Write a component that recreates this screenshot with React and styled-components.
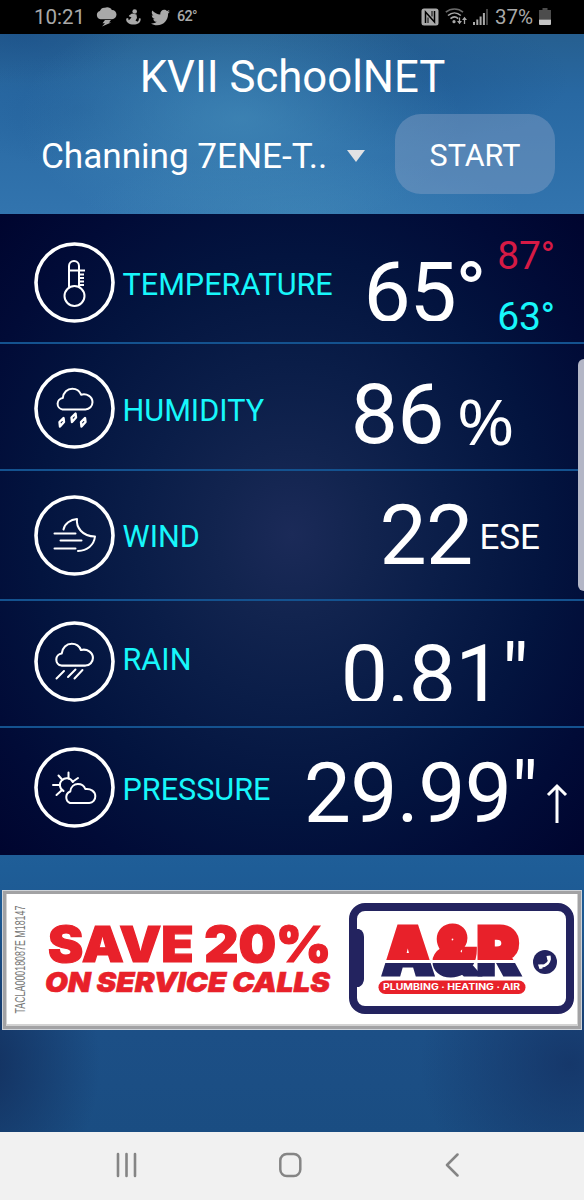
import React from "react";
import styled, { createGlobalStyle } from "styled-components";
import { FaTwitter } from "react-icons/fa";

const GlobalStyle = createGlobalStyle`
  * { box-sizing: border-box; }
  body { margin: 0; background: #000; }
`;

const Screen = styled.div`
  position: relative;
  display: flex;
  flex-direction: column;
  width: 584px;
  height: 1200px;
  overflow: hidden;
  font-family: Roboto, "Liberation Sans", sans-serif;
  color: #fff;
`;

const StatusBar = styled.div`
  display: flex;
  align-items: center;
  justify-content: space-between;
  height: 34px;
  padding: 0 33px 0 34px;
  background: #000;
  color: #a9a9a9;
  font-size: 20.5px;
  line-height: 36px;
  svg { display: block; flex: none; }
`;

const StatusGroup = styled.div`
  display: flex;
  align-items: center;
  gap: ${(p) => p.$gap}px;
`;

const Clock = styled.span`
  width: 52px;
`;

const SmallTemp = styled.span`
  margin-left: -2px;
  font-size: 14.5px;
  font-weight: 500;
  letter-spacing: -0.8px;
`;

const Sky = styled.main`
  display: flex;
  flex-direction: column;
  height: 1098px;
  background:
    radial-gradient(ellipse 220px 120px at 240px 85px, rgba(74, 147, 189, 0.55), transparent),
    radial-gradient(ellipse 120px 60px at 80px 75px, rgba(30, 88, 146, 0.35), transparent),
    radial-gradient(ellipse 170px 70px at 400px 45px, rgba(28, 84, 140, 0.5), transparent),
    radial-gradient(ellipse 220px 60px at 300px 180px, rgba(66, 138, 184, 0.5), transparent),
    radial-gradient(ellipse 120px 50px at 20px 0, rgba(24, 76, 136, 0.5), transparent),
    radial-gradient(ellipse 120px 150px at -20px 1030px, rgba(18, 46, 92, 0.95), transparent),
    radial-gradient(ellipse 150px 140px at 570px 1030px, rgba(20, 50, 100, 0.8), transparent),
    linear-gradient(180deg, #265f90 0, #2868a2 60px, #3274ae 180px, #2868a2 700px, #1e5d97 835px, #1c4f86 1000px, #1a4d82 1098px);
`;

const Header = styled.header`
  display: flex;
  flex-direction: column;
  height: 180px;
`;

const Title = styled.h1`
  margin: 16.5px 0 0 1px;
  font-size: 43.7px;
  font-weight: 400;
  line-height: 52px;
  text-align: center;
`;

const Controls = styled.div`
  display: flex;
  align-items: center;
  height: 80px;
  margin-top: 11.5px;
  padding: 0 29px 0 41px;
`;

const StationSelect = styled.div`
  display: flex;
  align-items: center;
  flex: 1;
  gap: 20px;
  padding-top: 4px;
  font-size: 35.2px;
  letter-spacing: -0.05px;
  line-height: 76px;
  white-space: nowrap;
`;

const Caret = styled.span`
  border: 9px solid transparent;
  border-top: 12px solid #e2e2e4;
  border-bottom: 0;
`;

const StartButton = styled.button`
  width: 160px;
  height: 80px;
  padding: 0;
  border: 0;
  border-radius: 26px;
  background: rgba(140, 165, 200, 0.42);
  color: #fff;
  font: 400 30.5px/84px Roboto, sans-serif;
`;

const Panel = styled.section`
  display: flex;
  flex-direction: column;
  height: 641px;
  background: radial-gradient(ellipse 410px 450px at 50% 50%, #1b2a58 0, #12244f 18%, #0a1d48 38%, #03143f 62%, #010b37 82%, #00052f 100%);
`;

const Row = styled.div`
  display: flex;
  align-items: flex-start;
  height: ${(p) => p.$height}px;
  padding-left: 34px;
  border-bottom: ${(p) => (p.$last ? 0 : "2px solid #14528f")};
`;

const IconSlot = styled.div`
  width: 81px;
  height: 81px;
  margin-top: ${(p) => p.$top}px;
  svg { display: block; }
`;

const Label = styled.div`
  flex: 1;
  margin: ${(p) => p.$top}px 0 0 7.5px;
  color: #17f7fb;
  font-size: 30.6px;
  line-height: 36px;
`;

const Reading = styled.div`
  display: flex;
  align-items: flex-start;
  margin-right: ${(p) => p.$right}px;
`;

const Value = styled.div`
  height: ${(p) => p.$clip || 100}px;
  margin-top: ${(p) => p.$top}px;
  overflow: ${(p) => (p.$clip ? "hidden" : "visible")};
  font-size: 84px;
  letter-spacing: ${(p) => p.$track ?? -0.7}px;
  line-height: 100px;
  white-space: nowrap;
`;

const Unit = styled.div`
  margin: ${(p) => p.$top}px 0 0 ${(p) => p.$left}px;
  font-size: ${(p) => p.$size}px;
  line-height: 1.2;
`;

const Percent = styled(Unit)`
  font-family: "Open Sans", "Noto Sans", sans-serif;
  transform: scaleX(1.13);
`;

const Extremes = styled.div`
  display: flex;
  flex-direction: column;
  gap: 13px;
  margin: 17.5px 0 0 12px;
  font-size: 39px;
  line-height: 48px;
  letter-spacing: -0.2px;
`;

const High = styled.span` color: #d61a45; `;
const Low = styled.span` color: #17f7fb; `;

const Ad = styled.a`
  display: flex;
  height: 140px;
  margin: 35px 2px 0;
  border: 1px solid #cfd3d8;
  box-shadow: inset 0 0 0 3px #a2a2a4, inset 0 -1px 0 4px #d2d2d2;
  background: #fff;
  color: #e8212a;
`;

const License = styled.div`
  width: 14px;
  height: 110px;
  margin: 14px 0 0 10px;
  writing-mode: vertical-rl;
  transform: rotate(180deg);
  color: #777;
  font: 400 14.5px/14px "Liberation Sans", sans-serif;
  white-space: nowrap;
  span {
    display: block;
    height: 184px;
    transform: translateY(1.5px) scaleY(0.612);
    transform-origin: top;
  }
`;

const Offer = styled.div`
  width: 300px;
  margin: 30px 0 0 21px;
  font-family: Inter, sans-serif;
  font-weight: 900;
  white-space: nowrap;
`;

const OfferMain = styled.div`
  width: max-content;
  margin-left: 0;
  font-size: 49px;
  line-height: 47px;
  -webkit-text-stroke: 1.2px #e8212a;
  transform: scaleX(1.08);
  transform-origin: left;
`;

const OfferSub = styled.div`
  width: max-content;
  margin-left: -3.5px;
  font-size: 27.5px;
  font-style: italic;
  line-height: 28px;
  -webkit-text-stroke: 0.6px #e8212a;
  transform: scaleX(1.075);
  transform-origin: left;
`;

const BrandSlot = styled.div`
  margin-top: 11px;
  svg { display: block; }
`;

const NavBar = styled.nav`
  display: flex;
  align-items: flex-start;
  height: 68px;
  padding: 20px 0 0 115px;
  gap: 142px;
  background: #f1f1f1;
  svg { display: block; }
`;

const EdgeHandle = styled.div`
  position: absolute;
  top: 359px;
  right: 0;
  width: 6px;
  height: 232px;
  border-radius: 6px 0 0 6px;
  background: #b3b6c6;
`;

const TrendArrow = styled.svg`
  display: block;
  width: 22px;
  height: 42px;
  margin: 54px 0 0 ${(p) => p.$left}px;
`;

const RoundIcon = ({ children }) => (
  <svg width="81" height="81" viewBox="0 0 81 81" fill="none" stroke="#fff" strokeWidth="2" strokeLinecap="round" strokeLinejoin="round">
    <circle cx="40.5" cy="40.5" r="38.5" strokeWidth="3.600" />
    {children}
  </svg>
);

const CLOUD = "M28.5 41.5a5.8 5.8 0 0 1 .3-11.5c.5-5.500 4.500-9.300 9.500-9.300 4 0 7.300 2 8.800 6 6-1.500 11.400 2.200 11.400 7.600a7.200 7.200 0 0 1-7 7.200z";

const thermometer = (
  <>
    <path d="M35 44.500V24a5 5 0 0 1 10 0v20.500" />
    <circle cx="40.500" cy="54" r="10" />
    <path d="M36 28.500h15M45 32.500h5M45 36h5M45 39.500h5M45 43h5" strokeLinecap="butt" />
  </>
);

const humidity = (
  <>
    <path d={CLOUD} />
    <path d="M41.500 45.500l.5 4-4 4.500-.5-4.500zM29.500 50l.5 4-4 4.500-.5-4.500zM51 50l.5 4-4 4.500-.5-4.500z" strokeWidth="2.400" />
  </>
);

const wind = (
  <path d="M29.500 34.500c1-6 7-10 13.500-10.500-1 8 5 17.500 18 17.500-1 9-8 14-17 14.500M20.500 38.500h21M26.500 45.500h21M20.500 53.500h21" />
);

const rain = (
  <>
    <path transform="translate(-2.500 1) scale(1.050)" d={CLOUD} />
    <path d="M30 50l-7.500 7.500M41.500 48.500l-7.500 7.500M48.500 49l-8 8.500" />
  </>
);

const pressure = (
  <>
    <path d="M29.500 44a6.800 6.800 0 1 1 9.300-9" />
    <path d="M34.500 25.500v6M24.500 28.500l4 4.500M44 31l-5 3.500M19 38h6M22.500 48l5-4.500" />
    <path d="M36 56a6.200 6.200 0 0 1 .3-11.500c.5-5 4-7.500 7.500-7.500 3.700 0 6.500 2 7.500 5 5.500-.7 10 2.500 10 7.200a6.500 6.500 0 0 1-6 6.800z" />
  </>
);

const StormIcon = () => (
  <svg width="21" height="20" viewBox="0 0 21 20" fill="#a9a9a9">
    <path d="M4.500 12.200a4.200 4.200 0 0 1-.6-8.200C4.800 1.500 7 .3 9 .8c2-1.200 6-.3 6.800 2.200 2.600-.1 4.700 1.800 4.700 4.500 0 2.700-1.900 4.700-4.500 4.700z" />
    <path d="M9 13h6l-2 2.500h2.200L6 19.500l3-3.300H6.500z" />
  </svg>
);

const DancerIcon = () => (
  <svg width="15" height="16" viewBox="0 0 15 16" fill="#a9a9a9">
    <circle cx="8.700" cy="2.500" r="2.300" />
    <path d="M6 4.500l4.500 1 .5 3.500-1.500 2.500 2 1.200c1.200-.8 1.500-2 1.400-3.400l1.800.3c.2 4-3 6-7 6C2.500 15.600-.5 13 .3 9.500l2-.6c-.2 1 .1 1.800.6 2.300L5.500 8.500 2.800 7.200l.5-1z" />
  </svg>
);

const NfcIcon = () => (
  <svg width="18" height="18" viewBox="0 0 18 18">
    <rect x=".5" y=".5" width="17" height="17" rx="2.500" fill="#a9a9a9" />
    <path d="M4.500 15V4l9 10V3" fill="none" stroke="#000" strokeWidth="1.500" />
    <path d="M7 15V9.500M11 3v5.500" fill="none" stroke="#000" strokeWidth="1" />
  </svg>
);

const WifiIcon = () => (
  <svg width="22" height="18" viewBox="0 0 22 18" fill="none" stroke="#a9a9a9" strokeWidth="1.600">
    <path d="M.8 4.200c5-4.300 12.500-4.300 17.200 0" stroke="#6a6a6a" />
    <path d="M3 7.500c4-3.400 9-3.400 12.800 0M5.500 10.700c2.500-2.200 5.300-2.200 7.600 0" />
    <circle cx="9" cy="13.700" r="1.600" fill="#a9a9a9" stroke="none" />
    <path d="M14.500 9.500v5M19.500 16v-5" strokeWidth="1.300" />
    <path d="M12 13h5l-2.500 3.300zM17 12h5l-2.500-3.300z" fill="#a9a9a9" stroke="none" />
  </svg>
);

const SignalIcon = () => (
  <svg width="16" height="18" viewBox="0 0 16 18" fill="#a9a9a9">
    <path d="M0 14h2v3H0zM3.300 11.500h2V17h-2zM6.600 8.500h2V17h-2zM9.900 5h2v12h-2z" />
    <path d="M13.200 1h1.600v16h-1.600z" fill="#555" />
  </svg>
);

const BatteryIcon = () => (
  <svg width="12" height="18" viewBox="0 0 12 18">
    <path d="M3.500 0h5v2H12v9.500H0V2h3.500z" fill="#4c4c4c" />
    <path d="M0 11.500h12V16a1 1 0 0 1-1 1H1a1 1 0 0 1-1-1z" fill="#c4c4c4" />
  </svg>
);

const Brand = () => (
  <svg width="228" height="112" viewBox="0 0 228 112">
    <defs>
      <linearGradient id="split" gradientUnits="userSpaceOnUse" x1="0" y1="20" x2="0" y2="76">
        <stop offset=".68" stopColor="#e8212a" />
        <stop offset=".68" stopColor="#fff" />
        <stop offset=".74" stopColor="#fff" />
        <stop offset=".74" stopColor="#23235f" />
      </linearGradient>
    </defs>
    <rect x="5" y="5" width="217" height="103" rx="12" fill="#fff" stroke="#23235f" strokeWidth="8" />
    <path d="M5 27h6q5 2 5 8v42q0 5-5 8H5z" fill="#23235f" />
    <text x="35" y="72" textLength="136" lengthAdjust="spacingAndGlyphs" fontFamily="Inter, sans-serif" fontWeight="900" fontSize="65" fill="url(#split)" stroke="url(#split)" strokeWidth="5">A&amp;R</text>
    <rect x="30.500" y="78.500" width="147" height="13.500" rx="6.700" fill="#e8212a" />
    <text x="35" y="88.300" textLength="137" lengthAdjust="spacingAndGlyphs" fontFamily="Inter, sans-serif" fontWeight="700" fontSize="8.500" fill="#fff">PLUMBING · HEATING · AIR</text>
    <circle cx="197" cy="60" r="12" fill="#23235f" />
    <path d="M201 54.500c2 5-3 10.500-9.500 9.500" fill="none" stroke="#fff" strokeWidth="2.600" />
    <path d="M198.500 54l4-.5v4.500l-3 .5zM190 62.500h4.500v4l-3 .5z" fill="#fff" />
  </svg>
);

export default function App() {
  return (
    <>
      <GlobalStyle />
      <Screen>
        <StatusBar>
          <StatusGroup $gap={9.5}>
            <Clock>10:21</Clock>
            <StormIcon />
            <DancerIcon />
            <FaTwitter size={19} />
            <SmallTemp>62°</SmallTemp>
          </StatusGroup>
          <StatusGroup $gap={6}>
            <NfcIcon />
            <WifiIcon />
            <SignalIcon />
            <span>37%</span>
            <BatteryIcon />
          </StatusGroup>
        </StatusBar>

        <Sky>
          <Header>
            <Title>KVII SchoolNET</Title>
            <Controls>
              <StationSelect>
                Channing 7ENE-T..
                <Caret />
              </StationSelect>
              <StartButton>START</StartButton>
            </Controls>
          </Header>

          <Panel>
            <Row $height={130}>
              <IconSlot $top={28}><RoundIcon>{thermometer}</RoundIcon></IconSlot>
              <Label $top={52.5}>TEMPERATURE</Label>
              <Reading $right={29}>
                <Value $top={29} $clip={78} $track={-1.4}>65°</Value>
                <Extremes>
                  <High>87°</High>
                  <Low>63°</Low>
                </Extremes>
              </Reading>
            </Row>
            <Row $height={127}>
              <IconSlot $top={24}><RoundIcon>{humidity}</RoundIcon></IconSlot>
              <Label $top={48.5}>HUMIDITY</Label>
              <Reading $right={73}>
                <Value $top={21}>86</Value>
                <Percent $top={40} $left={16} $size={62}>%</Percent>
              </Reading>
            </Row>
            <Row $height={130}>
              <IconSlot $top={24}><RoundIcon>{wind}</RoundIcon></IconSlot>
              <Label $top={48}>WIND</Label>
              <Reading $right={44}>
                <Value $top={15}>22</Value>
                <Unit $top={46} $left={7} $size={35}>ESE</Unit>
              </Reading>
            </Row>
            <Row $height={127}>
              <IconSlot $top={19.5}><RoundIcon>{rain}</RoundIcon></IconSlot>
              <Label $top={40.5}>RAIN</Label>
              <Reading $right={56}>
                <Value $top={25} $clip={75}>0.81"</Value>
              </Reading>
            </Row>
            <Row $height={127} $last>
              <IconSlot $top={19}><RoundIcon>{pressure}</RoundIcon></IconSlot>
              <Label $top={43.5}>PRESSURE</Label>
              <Reading $right={16}>
                <Value $top={16} $track={-0.7}>29.99"</Value>
                <TrendArrow $left={8.5} viewBox="0 0 22 42" fill="none" stroke="#fff" strokeWidth="3">
                  <path d="M11 41V4M2 13l9-9 9 9" />
                </TrendArrow>
              </Reading>
            </Row>
          </Panel>

          <Ad>
            <License><span>TACLA00018087E M18147</span></License>
            <Offer>
              <OfferMain>SAVE 20%</OfferMain>
              <OfferSub>ON SERVICE CALLS</OfferSub>
            </Offer>
            <BrandSlot><Brand /></BrandSlot>
          </Ad>
        </Sky>

        <NavBar>
          <svg width="22" height="26" viewBox="0 0 22 26" stroke="#858585" strokeWidth="2.600" strokeLinecap="round">
            <path d="M3 2v22M11.500 2v22M20 2v22" />
          </svg>
          <svg width="24" height="26" viewBox="0 0 24 26" fill="none" stroke="#858585" strokeWidth="2.500">
            <rect x="1.300" y="2" width="20" height="22" rx="6.500" />
          </svg>
          <svg width="14" height="26" viewBox="0 0 14 26" fill="none" stroke="#858585" strokeWidth="2.500" strokeLinecap="round" strokeLinejoin="round">
            <path d="M12.500 2.500L2 13l10.500 10.500" />
          </svg>
        </NavBar>
        <EdgeHandle />
      </Screen>
    </>
  );
}
